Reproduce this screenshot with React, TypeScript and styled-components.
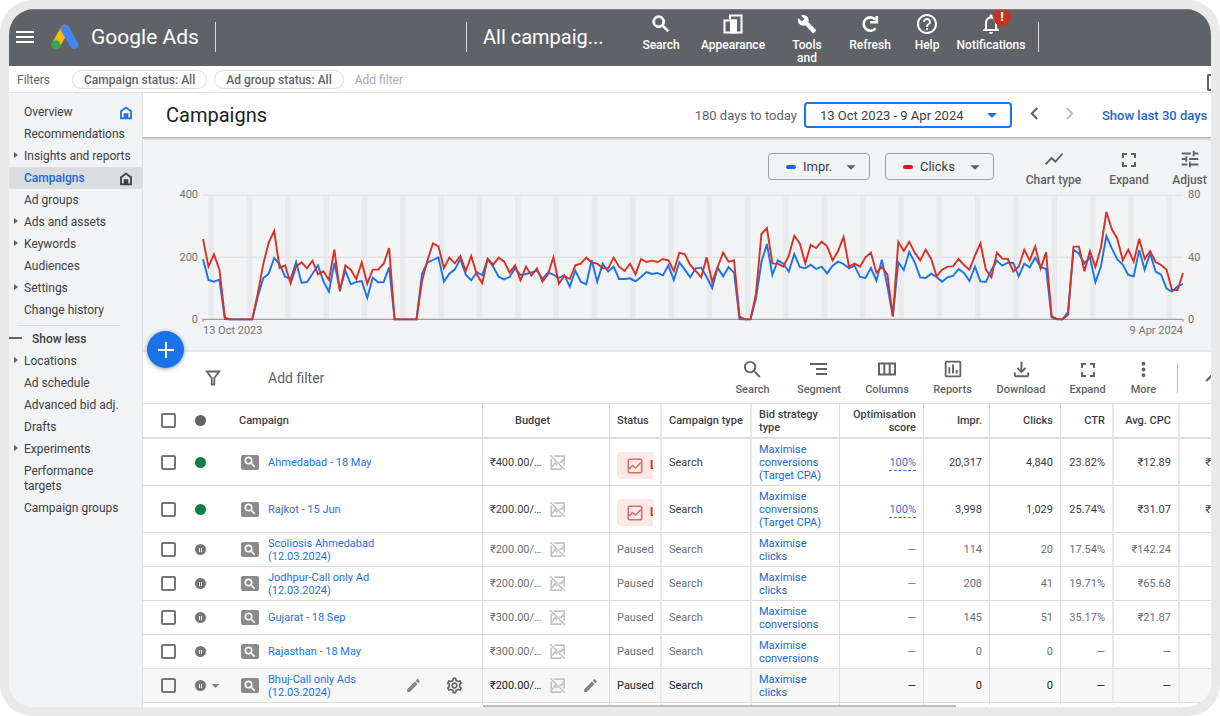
import React from "react";
import styled, { createGlobalStyle, css } from "styled-components";
import {
  MdArrowDropDown, MdBuild, MdChevronLeft, MdChevronRight, MdEdit, MdFullscreen,
  MdHelpOutline, MdKeyboardArrowUp, MdMoreVert, MdNotificationsNone, MdOutlineAssessment,
  MdOutlineFileDownload, MdOutlineSettings, MdSearch, MdShowChart, MdTune,
} from "react-icons/md";

const GlobalStyle = createGlobalStyle`
  * { box-sizing: border-box; }
  body { margin: 0; background: #fff; font-family: Roboto, "Liberation Sans", sans-serif; font-size: 12px; color: #3c4043; }
  button, select { font: inherit; color: inherit; background: none; border: 0; padding: 0; margin: 0; cursor: pointer; }
  a { text-decoration: none; color: inherit; }
  svg { display: block; flex-shrink: 0; }
`;

const Bezel = styled.div`
  padding: 9px;
  background: #e9e9e9;
  border-radius: 32px;
`;
const Screen = styled.div`
  overflow: hidden;
  border-radius: 25px;
  background: #fff;
`;

/* ---------- top bar ---------- */
const TopBar = styled.header`
  display: flex;
  height: 57px;
  overflow: hidden;
  background: #5f6368;
  color: #fff;
  padding: 0 156px 2px 7px;
  border-top: 1px solid #7b7f83;
`;
const MenuButton = styled.button`
  align-self: center;
  margin-right: 17px;
`;
const Brand = styled.a`
  display: flex;
  align-items: center;
  gap: 12px;
  font-size: 21px;
`;
const TopDivider = styled.span`
  width: 1px;
  height: 30px;
  margin: 12px 16px 0;
  background: #dadce0;
`;
const Spacer = styled.span`
  flex: 1;
`;
const Account = styled.span`
  width: 150px;
  align-self: center;
  font-size: 20px;
`;
const TopActions = styled.nav`
  display: grid;
  grid-template-columns: 56px 88px 60px 66px 48px 80px;
  margin-right: -9px;
`;
const TopAction = styled.button`
  display: flex;
  flex-direction: column;
  align-items: center;
  gap: 3px;
  line-height: 13px;
  font-weight: 500;
  padding: 2px 14px 0;
  white-space: nowrap;
  height: 56px;
`;
const IconBox = styled.span`
  display: grid;
  place-items: center;
  position: relative;
  height: 24px;
`;
const Wrapped = styled.span`
  white-space: normal;
  width: 40px;
`;
const Alert = styled.span`
  position: absolute;
  left: 14px;
  top: -4px;
  width: 18px;
  height: 18px;
  border-radius: 50%;
  background: #c5341f;
  font-size: 13px;
  line-height: 18px;
  font-weight: 700;
  text-align: center;
`;
const BoldSearch = styled(MdSearch)`
  stroke: none;
  path:last-child {
    stroke: currentColor;
    stroke-width: 1px;
  }
`;

/* ---------- filter bar ---------- */
const FilterBar = styled.div`
  display: flex;
  align-items: center;
  height: 27px;
  padding: 1px 0 0 8px;
  border-bottom: 1px solid #e0e0e0;
  color: #5f6368;
`;
const FilterLabel = styled.span`
  width: 55px;
`;
const Chip = styled.button`
  height: 19px;
  padding: 0 11px;
  margin-right: 7px;
  border: 1px solid #dadce0;
  border-radius: 10px;
  font-weight: 500;
`;
const AddFilter = styled.button`
  margin: 0 auto 0 4px;
  color: #a8abaf;
`;
const EdgeIcon = styled.span`
  width: 4px;
  height: 17px;
  margin-top: 5px;
  border: 2px solid #5f6368;
  border-right: 0;
  border-radius: 2px 0 0 2px;
`;

/* ---------- body ---------- */
const Body = styled.div`
  display: flex;
`;
const Side = styled.nav`
  width: 134px;
  flex-shrink: 0;
  padding-top: 8px;
  background: #f1f3f4;
  border-right: 1px solid #e0e0e0;
`;
const SideItem = styled.a<{ $active?: boolean; $strong?: boolean }>`
  display: flex;
  align-items: center;
  min-height: 22px;
  padding: 4px 9px 3px 0;
  line-height: 15px;
  font-weight: ${(p) => (p.$active || p.$strong ? 500 : 400)};
  color: ${(p) => (p.$active ? "#1967d2" : "#3c4043")};
  background: ${(p) => (p.$active ? "#dadce0" : "transparent")};
`;
const Marker = styled.span<{ $open?: boolean; $dash?: boolean }>`
  width: ${(p) => (p.$dash ? 23 : 15)}px;
  padding-left: ${(p) => (p.$dash ? 0 : 5)}px;
  padding-bottom: 3px;
  flex-shrink: 0;
  &::before {
    content: "";
    display: block;
    ${(p) =>
      p.$dash
        ? css`width: 13px; height: 2px; background: #5f6368;`
        : css`width: 0; height: 0; border: 3px solid transparent; border-right-width: 0; border-left-width: 4px;
            border-left-color: ${p.$open ? "#5f6368" : "transparent"};`}
  }
`;
const SideText = styled.span`
  flex: 1;
`;
const SideRule = styled.hr`
  margin: 4px 22px 2px 8px;
  border: 0;
  border-top: 1px solid #dadce0;
`;
const Main = styled.main`
  flex: 1;
  min-width: 0;
  overflow: hidden;
`;
const TitleBar = styled.div`
  position: relative;
  display: flex;
  align-items: center;
  height: 45px;
  padding-left: 23px;
  border-bottom: 1px solid #b5b7b9;
  box-shadow: 0 1px 2px rgba(60, 64, 67, 0.3);
  white-space: nowrap;
  z-index: 1;
`;
const Title = styled.h1`
  margin: 0 auto 0 0;
  font-size: 20px;
  font-weight: 400;
  color: #202124;
`;
const Period = styled.label`
  font-size: 13px;
  color: #5f6368;
  margin-right: 7px;
`;
const Picker = styled.div<{ $primary?: boolean }>`
  display: flex;
  align-items: center;
  position: relative;
  height: ${(p) => (p.$primary ? 26 : 27)}px;
  border: ${(p) => (p.$primary ? "2px solid #1a73e8" : "1px solid #9aa0a6")};
  border-radius: 4px;
  font-size: 13px;
  > svg { position: absolute; right: ${(p) => (p.$primary ? 6 : 7)}px; pointer-events: none;
    color: ${(p) => (p.$primary ? "#1a73e8" : "#5f6368")}; }
`;
const Select = styled.select<{ $w: number; $pad: number }>`
  appearance: none;
  width: ${(p) => p.$w}px;
  height: 100%;
  padding-left: ${(p) => p.$pad}px;
  outline: 0;
`;
const Swatch = styled.span<{ $c: string }>`
  position: absolute;
  left: 17px;
  width: 10px;
  height: 4px;
  border-radius: 2px;
  background: ${(p) => p.$c};
`;
const Step = styled.button<{ $off?: boolean }>`
  color: ${(p) => (p.$off ? "#bdc1c6" : "#5f6368")};
  margin-left: 10px;
  margin-top: -4px;
`;
const ShowLast = styled.a`
  margin-left: 20px;
  width: 109px;
  font-size: 13px;
  font-weight: 500;
  color: #1967d2;
`;

/* ---------- chart ---------- */
const ChartPanel = styled.section`
  position: relative;
  background: #f1f3f4;
  border-bottom: 2px solid #e3e5e7;
  padding-bottom: 12px;
`;
const ChartControls = styled.div`
  display: flex;
  justify-content: flex-end;
  height: 57px;
  padding-top: 15px;
`;
const Pickers = styled.div`
  display: flex;
  gap: 15px;
`;
const ToolGrid = styled.div<{ $cols: string }>`
  display: grid;
  grid-template-columns: ${(p) => p.$cols};
`;
const Tool = styled.button`
  display: flex;
  flex-direction: column;
  align-items: center;
  justify-content: space-between;
  color: #5f6368;
  font-weight: 500;
  line-height: 14px;
  height: 39px;
  white-space: nowrap;
`;
const ChartTools = styled(ToolGrid)`
  margin: -5px -5px 0 18px;
`;
const TableTools = styled(ToolGrid)`
  font-size: 11px;
`;
const Plot = styled.div`
  display: grid;
  grid-template-columns: 60px 1fr 28px;
`;
const Axis = styled.div<{ $right?: boolean }>`
  display: flex;
  flex-direction: column;
  justify-content: space-between;
  margin: -7px 0;
  padding: 0 5px;
  font-size: 11px;
  line-height: 14px;
  color: #757575;
  text-align: ${(p) => (p.$right ? "left" : "right")};
`;
const PlotSvg = styled.svg`
  width: 100%;
  height: 125px;
  overflow: visible;
`;
const Dates = styled.div`
  display: flex;
  justify-content: space-between;
  margin: 4px 28px 0 60px;
  font-size: 11px;
  line-height: 14px;
  color: #757575;
`;
const Fab = styled.button`
  position: absolute;
  left: 4px;
  bottom: -18px;
  z-index: 2;
  display: grid;
  place-items: center;
  width: 37px;
  height: 37px;
  border-radius: 50%;
  background: #1a73e8;
  box-shadow: 0 1px 4px rgba(60, 64, 67, 0.5);
`;

/* ---------- table ---------- */
const Toolbar = styled.div`
  display: flex;
  align-items: center;
  height: 52px;
  border-bottom: 1px solid #dadce0;
  padding-left: 62px;
  color: #5f6368;
`;
const ToolbarFilter = styled.button`
  display: flex;
  align-items: center;
  gap: 47px;
  margin-right: auto;
  font-size: 14px;
`;
const ToolbarDivider = styled.span`
  width: 1px;
  height: 30px;
  margin: 0 21px 0 11px;
  background: #bdc1c6;
`;
const ClippedIcon = styled.span`
  width: 12px;
  overflow: hidden;
`;
const Table = styled.table`
  width: 100%;
  table-layout: fixed;
  border-collapse: separate;
  border-spacing: 0;
  font-size: 11px;
  line-height: 13px;
`;
const Col = styled.col<{ $w?: number }>`
  ${(p) => p.$w && `width: ${p.$w}px;`}
`;
const cell = css<{ $num?: boolean; $line?: number }>`
  padding: 0 7px;
  vertical-align: middle;
  text-align: ${(p) => (p.$num ? "right" : "left")};
  border-right: ${(p) => p.$line ?? 1}px solid ${(p) => (p.$line === 2 ? "#e6e7ea" : "#dadce0")};
`;
const Th = styled.th<{ $num?: boolean; $line?: number; $center?: boolean }>`
  ${cell}
  height: 35px;
  border-bottom: 2px solid #dadce0;
  font-weight: 500;
  ${(p) => p.$center && "padding-left: 32px;"}
`;
const Td = styled.td<{ $num?: boolean; $line?: number; $nowrap?: boolean; $flush?: boolean }>`
  ${cell}
  border-bottom: 1px solid #dadce0;
  overflow: hidden;
  white-space: ${(p) => (p.$nowrap ? "nowrap" : "normal")};
  ${(p) => p.$flush && "padding-right: 0;"}
`;
const Tr = styled.tr<{ $state: "live" | "paused" | "hover" }>`
  height: ${(p) => (p.$state === "live" ? 47 : 34)}px;
  color: ${(p) => ({ live: "#3c4043", paused: "#6b6f74", hover: "#202124" })[p.$state]};
  background: ${(p) => (p.$state === "hover" ? "#f7f7f7" : "#fff")};
`;
const Check = styled.input`
  appearance: none;
  display: block;
  width: 15px;
  height: 15px;
  margin: 0 0 0 11px;
  border: 2px solid #757575;
  border-radius: 2px;
`;
const Inline = styled.div<{ $gap?: number }>`
  display: flex;
  align-items: center;
  gap: ${(p) => p.$gap ?? 0}px;
`;
const Dot = styled.span<{ $c: string }>`
  display: flex;
  align-items: center;
  justify-content: center;
  gap: 1px;
  width: 11px;
  height: 11px;
  border-radius: 50%;
  background: ${(p) => p.$c};
`;
const Bar = styled.i`
  width: 1px;
  height: 4px;
  background: #fff;
`;
const TypeIcon = styled.span`
  display: grid;
  place-items: center;
  width: 18px;
  height: 15px;
  border-radius: 2px;
  background: #8a8a8a;
  color: #fff;
`;
const NameCell = styled(Inline)`
  padding-left: 2px;
`;
const NameLink = styled.a`
  width: 124px;
  color: #1a73e8;
`;
const RowTools = styled.span<{ $end: number }>`
  display: flex;
  align-items: center;
  gap: 23px;
  margin-left: auto;
  margin-right: ${(p) => p.$end}px;
`;
const IconButton = styled.button<{ $dark?: boolean }>`
  color: ${(p) => (p.$dark ? "#5f6368" : "#80868b")};
`;
const StrategyLink = styled.a`
  color: #1967d2;
`;
const Score = styled.a`
  color: #3f6fe0;
  padding-bottom: 1px;
  border-bottom: 1px dashed #3f6fe0;
`;
const Limited = styled.div`
  display: flex;
  align-items: center;
  gap: 7px;
  width: 36px;
  height: 27px;
  padding-left: 10px;
  margin-top: 7px;
  overflow: hidden;
  white-space: nowrap;
  border-radius: 4px 0 0 4px;
  background: #fce8e6;
  color: #d93025;
  font-size: 12px;
  font-weight: 700;
`;
const TailRow = styled.tr`
  height: 2px;
  td { height: 2px; padding: 0; border-right: 1px solid #dadce0; }
`;
const ScrollTrack = styled.div`
  height: 2px;
  margin-left: 340px;
`;
const ScrollThumb = styled.div`
  width: 65%;
  height: 2px;
  background: #babdc4;
`;

/* Daily samples from 13 Oct to 9 Apr, measured down from the top of a 373-unit plot (offset 44). */
const CLICKS = [176,259,222,268,412,417,417,417,417,417,340,252,187,152,263,255,310,259,246,264,241,282,273,299,208,333,255,268,296,246,310,268,268,250,203,417,417,417,417,417,302,240,189,198,263,232,249,227,272,227,282,309,235,253,232,244,277,255,300,259,286,264,304,282,231,310,287,296,255,250,232,246,250,263,264,232,259,272,250,282,236,245,241,245,236,240,272,217,222,254,272,291,231,305,260,217,244,240,409,417,417,340,161,143,249,250,259,226,166,189,249,194,203,184,198,240,212,170,259,250,259,231,217,277,260,282,408,185,212,184,217,240,208,236,288,268,259,258,236,254,268,226,189,268,291,217,235,236,273,259,208,240,198,264,216,408,416,417,403,199,199,273,212,260,203,95,147,175,240,208,244,175,236,212,245,254,268,329,329,278];
const IMPRESSIONS = [237,299,304,298,416,417,417,417,417,417,350,294,280,233,252,289,296,245,307,305,280,255,303,334,248,328,271,312,305,302,353,292,306,305,261,417,417,417,417,417,280,246,239,231,304,280,267,236,283,300,276,284,236,259,289,297,290,264,284,281,276,271,295,277,283,293,284,319,271,304,312,240,304,250,274,259,296,296,294,303,290,275,281,278,285,255,299,246,268,291,264,262,290,323,262,288,260,277,416,417,417,355,245,191,284,240,250,274,221,260,264,253,266,259,279,256,244,251,264,256,290,293,263,301,238,318,408,246,269,215,246,291,293,280,290,304,291,287,266,278,302,259,303,305,269,241,256,247,248,288,250,261,232,260,266,411,417,417,395,208,220,249,231,306,259,167,204,237,253,284,288,209,268,219,274,283,325,334,318,311];
const line = (v: number[]) => v.map((y, i) => `${i * 10},${y - 44}`).join(" ");

function Chart() {
  return (
    <PlotSvg viewBox="0 0 1790 375" preserveAspectRatio="none" role="img" aria-label="Impressions and clicks per day">
      {Array.from({ length: 26 }, (_, k) => (
        <rect key={k} x={10 + 70 * k} y="0" width="10" height="373" fill="#e8eaed" />
      ))}
      <g fill="none">
        <path d="M0 1H1790M0 187H1790" stroke="#e3e4e6" strokeWidth="1.5" vectorEffect="non-scaling-stroke" />
        <path d="M0 380V373H1790V380" stroke="#9e9e9e" strokeWidth="1.2" vectorEffect="non-scaling-stroke" />
        <polyline points={line(IMPRESSIONS)} stroke="#1a73e8" strokeWidth="1.9" vectorEffect="non-scaling-stroke" />
        <polyline points={line(CLICKS)} stroke="#d93025" strokeWidth="1.9" vectorEffect="non-scaling-stroke" />
      </g>
    </PlotSvg>
  );
}

/* ---------- icons ---------- */
const MenuIcon = () => (
  <svg width="18" height="12" viewBox="0 0 18 12" fill="#fff"><path d="M0 0h18v2H0zM0 5h18v2H0zM0 10h18v2H0z" /></svg>
);
const AdsLogo = () => (
  <svg width="28" height="26" viewBox="0 0 84 78" strokeLinecap="round" strokeWidth="26">
    <path d="M15 62L42 15" stroke="#fbbc04" />
    <path d="M42 15L69 62" stroke="#4285f4" />
    <circle cx="15" cy="62" r="13.5" fill="#34a853" />
  </svg>
);
const AppearanceIcon = () => (
  <svg width="24" height="24" viewBox="0 0 24 24" fill="none" stroke="#fff" strokeWidth="2">
    <path d="M9 7V3.500H20.500V20.500H15" />
    <path d="M3.500 8.500H15V20.500H3.500z" />
    <path d="M10 8.500H15V20.500H10z" fill="#fff" />
  </svg>
);
const RefreshIcon = () => (
  <svg width="24" height="24" viewBox="0 0 24 24" fill="none" stroke="#fff" strokeWidth="2.600">
    <path d="M17.600 16.200A6.700 6.700 0 1 1 17.300 7.500" />
    <path d="M18.800 4V10.200H12.200" />
  </svg>
);
const HomeIcon = ({ color }: { color: string }) => (
  <svg width="14" height="14" viewBox="0 0 14 14">
    <path d="M2 5.200L7 1.500L12 5.200V12.300H2z" fill="none" stroke={color} strokeWidth="1.800" />
    <path d="M4.700 7.300H9.300V12H4.700z" fill={color} />
  </svg>
);
const FunnelIcon = () => (
  <svg width="16" height="16" viewBox="0 0 16 16" fill="none" stroke="#5f6368" strokeWidth="1.800">
    <path d="M1.800 1.500H14.200L9.300 8V14.500H6.700V8z" />
  </svg>
);
const SegmentIcon = () => (
  <svg width="22" height="22" viewBox="0 0 22 22" fill="#5f6368"><path d="M2 5h17v2H2zM8 10h11v2H8zM8 15h11v2H8z" /></svg>
);
const ColumnsIcon = () => (
  <svg width="22" height="22" viewBox="0 0 22 22" fill="none" stroke="#5f6368" strokeWidth="2">
    <path d="M3 5.500H19V16.500H3zM8.300 5.500V16.500M13.700 5.500V16.500" />
  </svg>
);
const NoChartIcon = () => (
  <svg width="17" height="17" viewBox="0 0 18 18" fill="none" stroke="#c0c2c4" strokeWidth="1.700">
    <path d="M5.500 2.300H16V12.500M13.500 16H2.300V5" />
    <path d="M3.500 13.500L6.500 9L8.500 12M11 8.500L13 9L15.500 5.500" />
    <path d="M1 1L17 17" />
  </svg>
);
const LimitedIcon = () => (
  <svg width="16" height="16" viewBox="0 0 16 16" fill="none" stroke="#cf7368" strokeWidth="1.600">
    <rect x="1.300" y="1.300" width="13.400" height="13.400" rx="1" />
    <path d="M2 11L5.500 7.500L8.500 10L14 4.500" />
  </svg>
);
const PlusIcon = () => (
  <svg width="16" height="16" viewBox="0 0 16 16" fill="#fff"><path d="M7 0h2v16H7zM0 7h16v2H0z" /></svg>
);

/* ---------- data ---------- */
type NavEntry = { label: string; open?: boolean; active?: boolean; icon?: string };
const NAV_TOP: NavEntry[] = [
  { label: "Overview", icon: "#1a73e8" },
  { label: "Recommendations" },
  { label: "Insights and reports", open: true },
  { label: "Campaigns", active: true, icon: "#3c4043" },
  { label: "Ad groups" },
  { label: "Ads and assets", open: true },
  { label: "Keywords", open: true },
  { label: "Audiences" },
  { label: "Settings", open: true },
  { label: "Change history" },
];
const NAV_MORE: NavEntry[] = [
  { label: "Locations", open: true },
  { label: "Ad schedule" },
  { label: "Advanced bid adj." },
  { label: "Drafts" },
  { label: "Experiments", open: true },
  { label: "Performance targets" },
  { label: "Campaign groups" },
];
type Row = {
  name: string; budget: string; state: "live" | "paused" | "hover"; strategy: string;
  score: string; impr: string; clicks: string; ctr: string; cpc: string;
};
const ROWS: Row[] = [
  { name: "Ahmedabad - 18 May", budget: "₹400.00/…", state: "live", strategy: "Maximise conversions (Target CPA)", score: "100%", impr: "20,317", clicks: "4,840", ctr: "23.82%", cpc: "₹12.89" },
  { name: "Rajkot - 15 Jun", budget: "₹200.00/…", state: "live", strategy: "Maximise conversions (Target CPA)", score: "100%", impr: "3,998", clicks: "1,029", ctr: "25.74%", cpc: "₹31.07" },
  { name: "Scoliosis Ahmedabad (12.03.2024)", budget: "₹200.00/…", state: "paused", strategy: "Maximise clicks", score: "—", impr: "114", clicks: "20", ctr: "17.54%", cpc: "₹142.24" },
  { name: "Jodhpur-Call only Ad (12.03.2024)", budget: "₹200.00/…", state: "paused", strategy: "Maximise clicks", score: "—", impr: "208", clicks: "41", ctr: "19.71%", cpc: "₹65.68" },
  { name: "Gujarat - 18 Sep", budget: "₹300.00/…", state: "paused", strategy: "Maximise conversions", score: "—", impr: "145", clicks: "51", ctr: "35.17%", cpc: "₹21.87" },
  { name: "Rajasthan - 18 May", budget: "₹300.00/…", state: "paused", strategy: "Maximise conversions", score: "—", impr: "0", clicks: "0", ctr: "—", cpc: "—" },
  { name: "Bhuj-Call only Ads (12.03.2024)", budget: "₹200.00/…", state: "hover", strategy: "Maximise clicks", score: "—", impr: "0", clicks: "0", ctr: "—", cpc: "—" },
];

const NavList = ({ items }: { items: NavEntry[] }) => (
  <>
    {items.map((n) => (
      <SideItem key={n.label} href="#" $active={n.active}>
        <Marker $open={n.open} />
        <SideText>{n.label}</SideText>
        {n.icon && <HomeIcon color={n.icon} />}
      </SideItem>
    ))}
  </>
);

function CampaignRow({ row }: { row: Row }) {
  const live = row.state === "live";
  const hover = row.state === "hover";
  return (
    <Tr $state={row.state}>
      <Td $line={0}><Check type="checkbox" aria-label={`Select ${row.name}`} /></Td>
      <Td $line={0}>
        <Inline>
          <Dot $c={live ? "#0b8043" : "#757575"}>{!live && <><Bar /><Bar /></>}</Dot>
          {hover && <MdArrowDropDown size={19} color="#80868b" />}
        </Inline>
      </Td>
      <Td>
        <NameCell $gap={9}>
          <TypeIcon><BoldSearch size={14} /></TypeIcon>
          <NameLink href="#">{row.name}</NameLink>
          {hover && (
            <RowTools $end={11}>
              <IconButton aria-label="Edit name"><MdEdit size={17} /></IconButton>
              <IconButton $dark aria-label="Campaign settings"><MdOutlineSettings size={19} /></IconButton>
            </RowTools>
          )}
        </NameCell>
      </Td>
      <Td $nowrap>
        <Inline $gap={8}>
          {row.budget}
          <NoChartIcon />
          {hover && <RowTools $end={3}><IconButton aria-label="Edit budget"><MdEdit size={17} /></IconButton></RowTools>}
        </Inline>
      </Td>
      <Td $line={2} $nowrap>{live ? <Limited><LimitedIcon />L</Limited> : "Paused"}</Td>
      <Td $line={2}>Search</Td>
      <Td><StrategyLink href="#">{row.strategy}</StrategyLink></Td>
      <Td $num>{live ? <Score href="#">{row.score}</Score> : row.score}</Td>
      <Td $num>{row.impr}</Td>
      <Td $num>{row.clicks}</Td>
      <Td $num $line={2}>{row.ctr}</Td>
      <Td $num $line={2}>{row.cpc}</Td>
      <Td $num $line={0} $flush>{live ? "₹" : ""}</Td>
    </Tr>
  );
}

export default function App() {
  return (
    <>
      <GlobalStyle />
      <Bezel>
        <Screen>
          <TopBar>
            <MenuButton aria-label="Menu"><MenuIcon /></MenuButton>
            <Brand href="#"><AdsLogo />Google Ads</Brand>
            <TopDivider />
            <Spacer />
            <TopDivider />
            <Account>All campaig...</Account>
            <TopActions>
              <TopAction><IconBox><BoldSearch size={22} /></IconBox>Search</TopAction>
              <TopAction><IconBox><AppearanceIcon /></IconBox>Appearance</TopAction>
              <TopAction><IconBox><MdBuild size={20} /></IconBox><Wrapped>Tools and</Wrapped></TopAction>
              <TopAction><IconBox><RefreshIcon /></IconBox>Refresh</TopAction>
              <TopAction><IconBox><MdHelpOutline size={24} /></IconBox>Help</TopAction>
              <TopAction><IconBox><MdNotificationsNone size={24} /><Alert>!</Alert></IconBox>Notifications</TopAction>
            </TopActions>
            <TopDivider />
          </TopBar>
          <FilterBar>
            <FilterLabel>Filters</FilterLabel>
            <Chip>Campaign status: All</Chip>
            <Chip>Ad group status: All</Chip>
            <AddFilter>Add filter</AddFilter>
            <EdgeIcon />
          </FilterBar>
          <Body>
            <Side>
              <NavList items={NAV_TOP} />
              <SideRule />
              <SideItem href="#" $strong><Marker $dash /><SideText>Show less</SideText></SideItem>
              <NavList items={NAV_MORE} />
            </Side>
            <Main>
              <TitleBar>
                <Title>Campaigns</Title>
                <Period htmlFor="range">180 days to today</Period>
                <Picker $primary>
                  <Select id="range" $w={204} $pad={14}><option>13 Oct 2023 - 9 Apr 2024</option></Select>
                  <MdArrowDropDown size={24} />
                </Picker>
                <Step aria-label="Previous period"><MdChevronLeft size={25} /></Step>
                <Step $off aria-label="Next period"><MdChevronRight size={25} /></Step>
                <ShowLast href="#">Show last 30 days</ShowLast>
              </TitleBar>
              <ChartPanel>
                <ChartControls>
                  <Pickers>
                    <Picker>
                      <Swatch $c="#1967d2" />
                      <Select aria-label="First metric" $w={100} $pad={34}><option>Impr.</option></Select>
                      <MdArrowDropDown size={22} />
                    </Picker>
                    <Picker>
                      <Swatch $c="#c5221f" />
                      <Select aria-label="Second metric" $w={107} $pad={34}><option>Clicks</option></Select>
                      <MdArrowDropDown size={22} />
                    </Picker>
                  </Pickers>
                  <ChartTools $cols="83px 68px 53px">
                    <Tool><MdShowChart size={22} />Chart type</Tool>
                    <Tool><MdFullscreen size={24} />Expand</Tool>
                    <Tool><MdTune size={22} />Adjust</Tool>
                  </ChartTools>
                </ChartControls>
                <Plot>
                  <Axis><span>400</span><span>200</span><span>0</span></Axis>
                  <Chart />
                  <Axis $right><span>80</span><span>40</span><span>0</span></Axis>
                </Plot>
                <Dates><span>13 Oct 2023</span><span>9 Apr 2024</span></Dates>
                <Fab aria-label="New campaign"><PlusIcon /></Fab>
              </ChartPanel>
              <Toolbar>
                <ToolbarFilter><FunnelIcon />Add filter</ToolbarFilter>
                <TableTools $cols="57px 76px 60px 71px 66px 67px 45px">
                  <Tool><MdSearch size={23} />Search</Tool>
                  <Tool><SegmentIcon />Segment</Tool>
                  <Tool><ColumnsIcon />Columns</Tool>
                  <Tool><MdOutlineAssessment size={22} />Reports</Tool>
                  <Tool><MdOutlineFileDownload size={23} />Download</Tool>
                  <Tool><MdFullscreen size={24} />Expand</Tool>
                  <Tool><MdMoreVert size={23} />More</Tool>
                </TableTools>
                <ToolbarDivider />
                <ClippedIcon><MdKeyboardArrowUp size={26} /></ClippedIcon>
              </Toolbar>
              <Table>
                <colgroup>
                  <Col $w={45} /><Col $w={44} /><Col />
                  <Col $w={127} /><Col $w={52} /><Col $w={90} /><Col $w={88} /><Col $w={84} />
                  <Col $w={66} /><Col $w={71} /><Col $w={53} /><Col $w={66} /><Col $w={31} />
                </colgroup>
                <thead>
                  <tr>
                    <Th $line={0}><Check type="checkbox" aria-label="Select all" /></Th>
                    <Th $line={0}><Dot $c="#5f6368" /></Th>
                    <Th>Campaign</Th>
                    <Th $center>Budget</Th>
                    <Th $line={2}>Status</Th>
                    <Th $line={2}>Campaign type</Th>
                    <Th>Bid strategy type</Th>
                    <Th $num>Optimisation score</Th>
                    <Th $num>Impr.</Th>
                    <Th $num>Clicks</Th>
                    <Th $num $line={2}>CTR</Th>
                    <Th $num $line={2}>Avg. CPC</Th>
                    <Th $line={0} />
                  </tr>
                </thead>
                <tbody>
                  {ROWS.map((r) => <CampaignRow key={r.name} row={r} />)}
                  <TailRow aria-hidden="true">
                    <td colSpan={3} /><td /><td /><td /><td /><td /><td /><td /><td /><td /><td />
                  </TailRow>
                </tbody>
              </Table>
              <ScrollTrack><ScrollThumb /></ScrollTrack>
            </Main>
          </Body>
        </Screen>
      </Bezel>
    </>
  );
}
